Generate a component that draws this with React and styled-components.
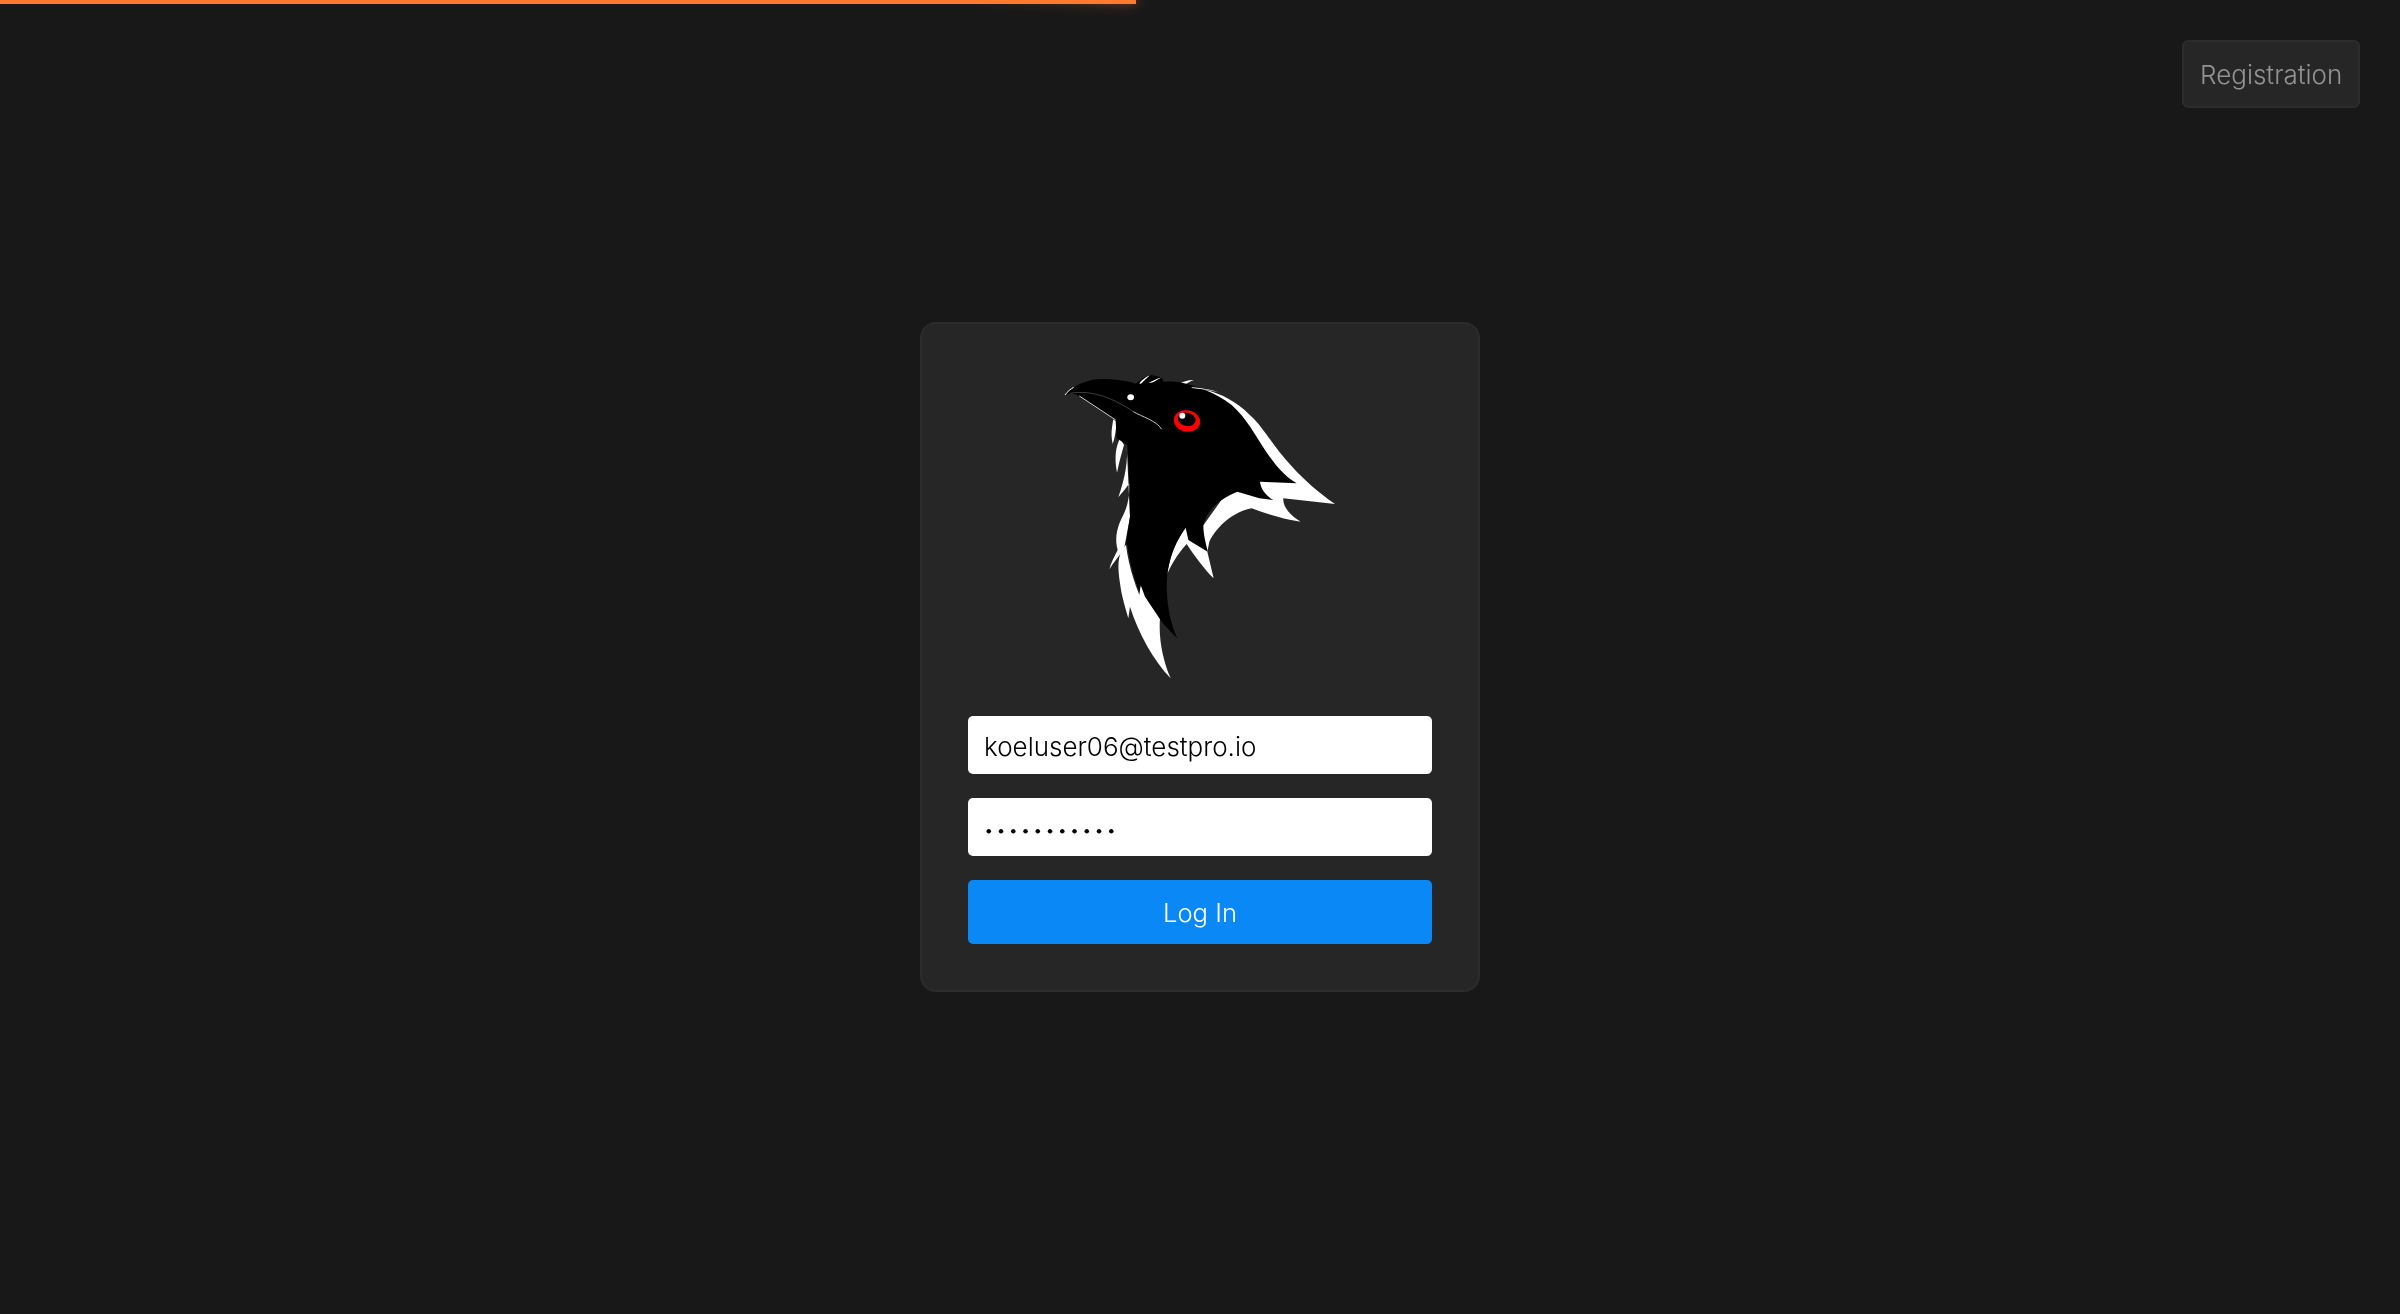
import styled, { createGlobalStyle } from 'styled-components';

const GlobalStyle = createGlobalStyle`
  html, body {
    margin: 0;
    padding: 0;
    background: #181818;
  }
  * {
    box-sizing: border-box;
  }
`;

const Logo = () => (
  <LogoSvg viewBox="0 60 1080 960" aria-label="Koel logo">
    <path fill="#000" d="M345 106 C355 92 372 80 392 75 L425 82 L432 100 L400 108 Z" />
    <g fill="#fff">
      {/* wing stripe and neck */}
      <path d="M515 112 C560 118 600 130 640 155 C665 170 685 190 700 205 C720 225 740 255 750 268 C780 310 840 390 945 462 L790 445 C788 470 810 495 842 515 C800 510 750 495 695 475 C640 485 590 530 568 575 L562 605 L581 685 C555 660 525 620 500 582 C475 610 455 640 442 672 C450 610 470 570 497 533 L540 540 L640 400 L720 385 Z" />
      {/* left neck feathers */}
      <path d="M280 208 C275 235 272 255 278 282 C285 262 288 240 290 215 Z" />
      <path d="M300 265 C288 290 282 320 291 368 C298 335 305 310 312 285 Z" />
      <path d="M320 285 C325 330 315 385 295 442 C305 430 318 415 328 400 C330 430 325 470 305 505 C288 540 285 570 293 600 C283 620 272 640 268 658 C282 635 300 615 312 598 L330 500 Z" />
      {/* lower breast feathers */}
      <path d="M318 585 C292 610 292 650 300 700 C305 740 315 770 325 805 L330 770 C355 850 400 930 452 985 C430 935 415 870 420 805 L362 705 L358 735 C340 690 325 640 318 585 Z" />
      {/* crest */}
      <path d="M358 100 C366 90 376 81 390 76 C380 85 370 94 362 103 Z" />
      <path d="M370 110 C385 98 405 88 425 82 C408 92 390 102 375 112 Z" />
      <path d="M392 111 C405 105 418 102 432 100 C418 105 405 110 396 113 Z" />
      <path d="M468 106 C485 96 502 90 522 90 C508 95 498 102 490 108 Z" />
    </g>
    <path
      fill="#000"
      d="M135 135 C165 100 215 82 270 88 C300 90 330 95 350 102 C390 100 440 90 480 97 C530 108 590 130 635 165 C680 205 705 255 735 300 C765 345 795 380 830 400 L720 395 C722 415 735 435 760 450 L718 445 L652 425 C600 445 560 480 550 525 C550 555 558 580 563 605 L505 570 L497 533 C470 570 450 615 442 672 C436 730 445 810 472 865 C448 840 430 825 418 805 L375 740 L362 705 L358 725 C340 680 330 640 322 585 L318 580 L330 500 L328 400 L322 285 L290 265 L287 212 L178 140 C165 128 150 130 135 135 Z"
    />
    <path fill="none" stroke="#fff" strokeWidth="3" d="M135 135 C143 124 152 117 161 112" />
    <path fill="none" stroke="#fff" strokeWidth="2.5" d="M178 138 L287 210" />
    <path fill="none" stroke="#4a4a4a" strokeWidth="2.5" d="M150 130 C220 118 285 148 340 185" />
    <path fill="none" stroke="#e8e8e8" strokeWidth="2.5" d="M340 185 C365 200 410 212 425 238" />
    <path fill="#fff" d="M515 112 C545 114 575 120 597 127 C565 120 540 116 515 114 Z" />
    <ellipse cx="332" cy="142" rx="10" ry="9" fill="#fff" />
    <ellipse cx="501" cy="213" rx="40" ry="32" fill="#f00" transform="rotate(12 501 213)" />
    <ellipse cx="500" cy="208" rx="27" ry="20" fill="#000" transform="rotate(12 500 208)" />
    <circle cx="487" cy="197" r="9" fill="#fff" />
  </LogoSvg>
);

export default function App() {
  return (
    <Page>
      <GlobalStyle />
      <ProgressBar />
      <Header>
        <RegisterLink href="#">Registration</RegisterLink>
      </Header>
      <LoginCard onSubmit={(e) => e.preventDefault()}>
        <Logo />
        <TextInput type="email" defaultValue="koeluser06@testpro.io" />
        <PasswordInput type="password" defaultValue="pa$$word123" />
        <SubmitButton type="submit">Log In</SubmitButton>
      </LoginCard>
    </Page>
  );
}

const Page = styled.div`
  min-height: 100vh;
  display: grid;
  grid-template-rows: 1fr auto 1fr;
  justify-items: center;
  background: #181818;
  font-family: Inter, 'Liberation Sans', sans-serif;
  font-weight: 300;
`;

const ProgressBar = styled.div`
  position: fixed;
  top: 0;
  left: 0;
  width: 1136px;
  height: 4px;
  background: #ff7a2e;

  &::after {
    content: '';
    position: absolute;
    right: 0;
    width: 160px;
    height: 100%;
    box-shadow: 0 0 16px #ff7a2e, 0 0 8px #ff7a2e;
    opacity: 0.55;
    transform: rotate(3deg) translate(0, -6px);
  }
`;

const Header = styled.header`
  justify-self: stretch;
  display: flex;
  justify-content: flex-end;
  align-items: flex-start;
  padding: 40px 40px 0 0;
`;

const RegisterLink = styled.a`
  display: flex;
  align-items: center;
  height: 68px;
  padding: 0 16px;
  background: #262626;
  border: 2px solid #2c2c2c;
  border-radius: 6px;
  color: #949494;
  font-size: 26px;
  text-decoration: none;
  will-change: transform;
`;

const LoginCard = styled.form`
  width: 560px;
  display: flex;
  flex-direction: column;
  gap: 24px;
  padding: 46px;
  background: #262626;
  border: 2px solid #2c2c2c;
  border-radius: 16px;
  will-change: transform;
`;

const LogoSvg = styled.svg`
  display: block;
  align-self: center;
  width: 360px;
  height: 320px;
  margin-bottom: 2px;
`;

const TextInput = styled.input`
  display: block;
  width: 100%;
  height: 58px;
  padding: 2px 16px 0;
  background: #fff;
  border: 0;
  border-radius: 5px;
  color: #000;
  font-family: inherit;
  font-weight: inherit;
  font-size: 26px;
  outline: none;
`;

const PasswordInput = styled(TextInput)`
  padding-top: 6px;
  font-size: 17px;
  letter-spacing: 2.7px;
`;

const SubmitButton = styled.button`
  display: block;
  width: 100%;
  height: 64px;
  padding: 0;
  background: #0a88f5;
  border: 0;
  border-radius: 5px;
  color: #fff;
  font-family: inherit;
  font-weight: inherit;
  font-size: 25.6px;
`;
